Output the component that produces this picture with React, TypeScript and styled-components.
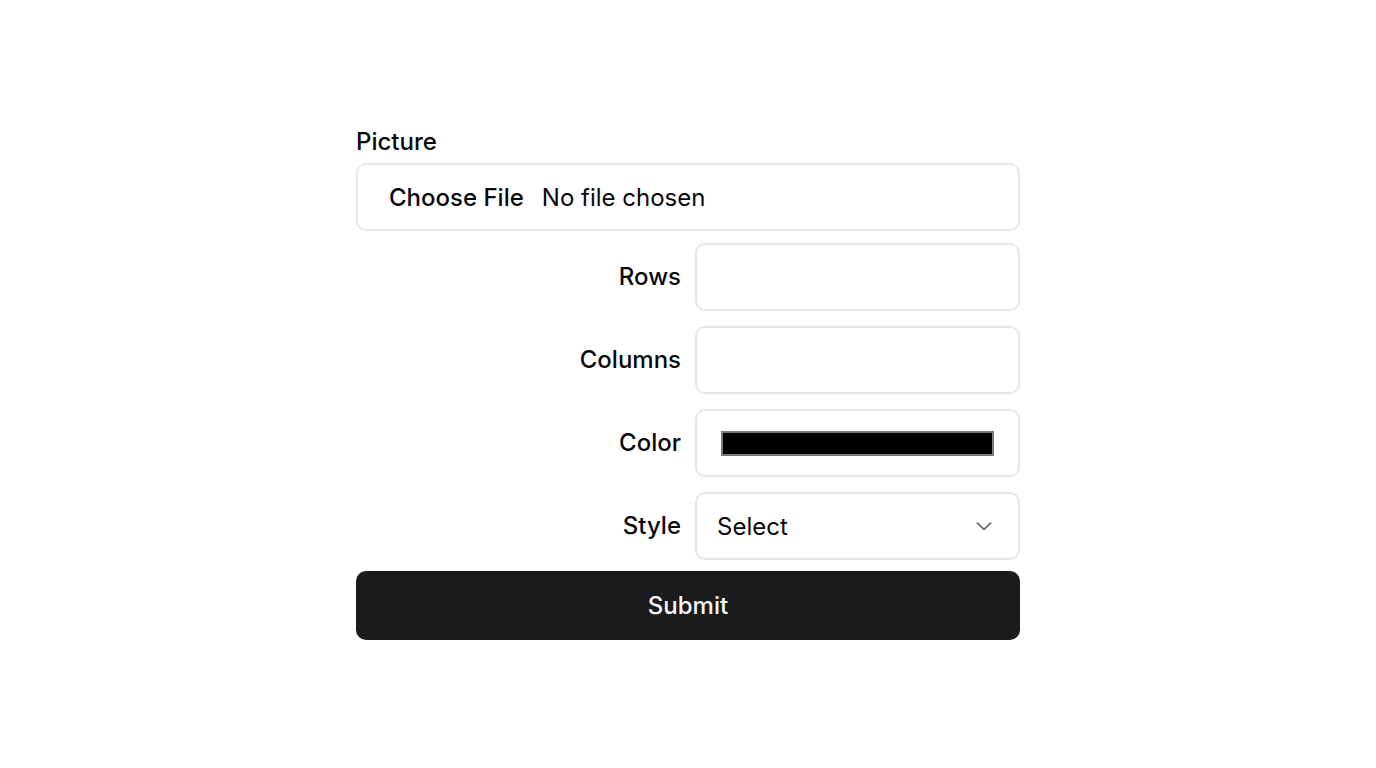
import React from "react";
import styled, { createGlobalStyle } from "styled-components";

const GlobalStyle = createGlobalStyle`
  html, body { margin: 0; padding: 0; background: #ffffff; }
  body { font-family: Inter, "Noto Sans", sans-serif; color: #09090b; }
  * { box-sizing: border-box; }
`;

const Page = styled.div`
  width: 1376px;
  height: 768px;
  display: flex;
  align-items: center;
  justify-content: center;
`;

const Form = styled.form`
  width: 664px;
  display: flex;
  flex-direction: column;
  gap: 12px;
`;

const Field = styled.div`
  display: flex;
  flex-direction: column;
  gap: 7px;
`;

const Label = styled.label<{ $align?: "left" | "right" }>`
  font-size: 24px;
  line-height: 28px;
  font-weight: 500;
  color: #09090b;
  text-align: ${(p) => p.$align ?? "left"};
`;

const Box = styled.div`
  height: 68px;
  border: 2px solid #e6e6e8;
  border-radius: 10px;
  background: #fff;
  display: flex;
  align-items: center;
`;

const FileBox = styled(Box)`
  padding-left: 31px;
  font-size: 24px;
  gap: 18px;
`;

const FileButton = styled.span`
  font-weight: 500;
  color: #09090b;
`;

const FileText = styled.span`
  font-weight: 400;
  color: #09090b;
`;

const Grid = styled.div`
  display: grid;
  grid-template-columns: 1fr 325px;
  column-gap: 14px;
  row-gap: 15px;
  align-items: center;
`;

const ColorBox = styled(Box)`
  padding: 0 24px;
`;

const Swatch = styled.div<{ $color: string }>`
  flex: 1;
  height: 25px;
  background: ${(p) => p.$color};
  border: 2px solid #7a7a7a;
`;

const SelectBox = styled(Box)`
  padding: 0 24px 0 20px;
  justify-content: space-between;
  font-size: 24px;
  color: #09090b;
`;

const SubmitButton = styled.button`
  height: 69px;
  border: none;
  border-radius: 10px;
  background: #1b1b1d;
  color: #fafafa;
  font-family: Inter, "Noto Sans", sans-serif;
  font-size: 24px;
  font-weight: 500;
  cursor: pointer;
  margin-top: -1px;
`;

const Chevron = () => (
  <svg width="20" height="20" viewBox="0 0 24 24" fill="none" stroke="#6b6b6b" strokeWidth="2.2" strokeLinecap="round" strokeLinejoin="round">
    <path d="m4 8.5 8 7.5 8-7.5" />
  </svg>
);

export default function App() {
  return (
    <>
      <GlobalStyle />
      <Page>
        <Form onSubmit={(e) => e.preventDefault()}>
          <Field>
            <Label>Picture</Label>
            <FileBox>
              <FileButton>Choose File</FileButton>
              <FileText>No file chosen</FileText>
            </FileBox>
          </Field>
          <Grid>
            <Label $align="right">Rows</Label>
            <Box />
            <Label $align="right">Columns</Label>
            <Box />
            <Label $align="right">Color</Label>
            <ColorBox>
              <Swatch $color="#000000" />
            </ColorBox>
            <Label $align="right">Style</Label>
            <SelectBox>
              <span>Select</span>
              <Chevron />
            </SelectBox>
          </Grid>
          <SubmitButton type="submit">Submit</SubmitButton>
        </Form>
      </Page>
    </>
  );
}
